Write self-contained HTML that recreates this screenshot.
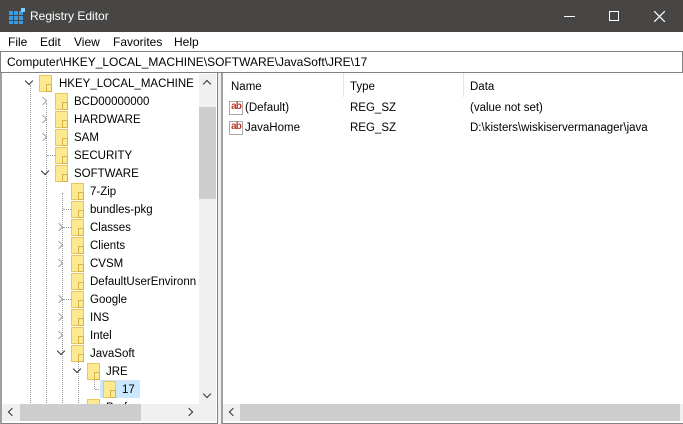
<!DOCTYPE html>
<html><head><style>
*{margin:0;padding:0;box-sizing:border-box}
body{width:683px;height:424px;overflow:hidden;background:#f0f0f0;font-family:"Liberation Sans",sans-serif;font-size:12px;color:#000;position:relative}
.a{position:absolute}
.title{left:0;top:0;width:683px;height:32px;background:#484644;color:#fff}
.menu{left:0;top:32px;width:683px;height:19px;background:#fff}
.menu span{position:absolute;top:3px}
.addr{left:0;top:51px;width:683px;height:22px;background:#fff;border:1px solid #828282;padding:3px 0 0 6px;white-space:nowrap}
.lp{left:0;top:73px;width:218px;height:351px;background:#fff;border:1px solid #828282;border-top:none;border-left:2px solid #a0a0a0}
.rp{left:221px;top:73px;width:462px;height:351px;background:#fff;border-left:2px solid #a0a0a0;border-bottom:1px solid #828282}
.f{position:absolute;width:13px;height:17px;background:#fde98f;border:1px solid #e8c65c}
.f:after{content:"";position:absolute;right:-1px;bottom:-1px;width:4px;height:6px;border:1px solid #d9b24a;background:#fde98f}
.t{position:absolute;white-space:nowrap;font-size:11.5px}
.cv{position:absolute;width:6px;height:6px;border-right:1.5px solid #333;border-bottom:1.5px solid #333;transform:rotate(45deg)}
.cr{position:absolute;width:6px;height:6px;border-right:1.5px solid #a0a0a0;border-bottom:1.5px solid #a0a0a0;transform:rotate(-45deg)}
.dv{position:absolute;border-left:1px dotted #999;width:0}
.dh{position:absolute;border-top:1px dotted #999;height:0}
.ab{position:absolute;width:14px;height:14px;border:1px solid #aaa;background:#fff;color:#c0392b;font-size:10px;font-weight:bold;line-height:10px;text-align:center;letter-spacing:-1px}
</style></head><body>
<div class="a title">
 <svg class="a" style="left:9px;top:8px" width="16" height="16"><g fill="#3a9be0"><rect x="0" y="3" width="4" height="4"/><rect x="5" y="3" width="4" height="4"/><rect x="10" y="3" width="4" height="4"/><rect x="0" y="8" width="4" height="4"/><rect x="5" y="8" width="4" height="4"/><rect x="10" y="8" width="4" height="4"/><rect x="0" y="13" width="4" height="3"/><rect x="5" y="13" width="4" height="3"/><rect x="10" y="13" width="4" height="3"/></g><rect x="12" y="0" width="4" height="4" fill="#7fd0ff"/></svg>
 <span class="a" style="left:30px;top:9px;font-size:12px">Registry Editor</span>
 <div class="a" style="left:564px;top:16px;width:11px;height:1px;background:#fff"></div>
 <div class="a" style="left:609px;top:11px;width:10px;height:10px;border:1px solid #fff"></div>
 <svg class="a" style="left:654px;top:11px" width="11" height="11"><path d="M0 0L11 11M11 0L0 11" stroke="#fff" stroke-width="1.2"/></svg>
</div>
<div class="a menu"><span style="left:8px">File</span><span style="left:40px">Edit</span><span style="left:74px">View</span><span style="left:113px">Favorites</span><span style="left:174px">Help</span></div>
<div class="a addr">Computer\HKEY_LOCAL_MACHINE\SOFTWARE\JavaSoft\JRE\17</div>
<div class="a lp">
 <div class="dv" style="left:28px;top:12px;height:320px"></div>
 <div class="dv" style="left:44px;top:30px;height:302px"></div>
 <div class="dv" style="left:60px;top:120px;height:212px"></div>
 <div class="dv" style="left:76px;top:282px;height:50px"></div>
 <div class="dv" style="left:92px;top:300px;height:16px"></div>
 <div class="dh" style="left:45px;top:82px;width:8px"></div>
 <div class="dh" style="left:61px;top:136px;width:8px"></div>
 <div class="dh" style="left:61px;top:154px;width:8px"></div>
 <div class="dh" style="left:61px;top:226px;width:8px"></div>
 <div class="dh" style="left:93px;top:316px;width:8px"></div>
 <div class="a" style="left:98px;top:307px;width:40px;height:18px;background:#cce8ff"></div>
</div>
<div id="tree"></div>
<div class="a" style="left:199px;top:74px;width:17px;height:330px;background:#f0f0f0"></div>
<div class="a" style="left:199px;top:107px;width:17px;height:92px;background:#cdcdcd"></div>
<div class="cv" style="left:204px;top:81px;transform:rotate(-135deg)"></div>
<div class="cv" style="left:204px;top:391px"></div>
<div class="a" style="left:2px;top:404px;width:214px;height:17px;background:#f0f0f0"></div>
<div class="a" style="left:20px;top:404px;width:121px;height:17px;background:#cdcdcd"></div>
<div class="cv" style="left:9px;top:409px;transform:rotate(135deg)"></div>
<div class="cv" style="left:186px;top:409px;transform:rotate(-45deg)"></div>
<div class="a rp">
 <div class="t" style="left:8px;top:8px">Name</div>
 <div class="a" style="left:120px;top:0;width:1px;height:24px;background:#e5e5e5"></div>
 <div class="t" style="left:127px;top:8px">Type</div>
 <div class="a" style="left:240px;top:0;width:1px;height:24px;background:#e5e5e5"></div>
 <div class="t" style="left:247px;top:8px">Data</div>
 <div class="ab" style="left:6px;top:28px">ab</div><div class="t" style="left:22px;top:29px">(Default)</div><div class="t" style="left:127px;top:29px">REG_SZ</div><div class="t" style="left:247px;top:29px">(value not set)</div>
 <div class="ab" style="left:6px;top:48px">ab</div><div class="t" style="left:22px;top:49px">JavaHome</div><div class="t" style="left:127px;top:49px">REG_SZ</div><div class="t" style="left:247px;top:49px">D:\kisters\wiskiservermanager\java</div>
</div>
<div class="a" style="left:223px;top:404px;width:460px;height:17px;background:#f0f0f0"></div>
<div class="a" style="left:240px;top:404px;width:440px;height:17px;background:#cdcdcd"></div>
<div class="cv" style="left:230px;top:409px;transform:rotate(135deg)"></div>
<script>
var rows=[["HKEY_LOCAL_MACHINE",0,"v"],["BCD00000000",1,">"],["HARDWARE",1,">"],["SAM",1,">"],["SECURITY",1,""],["SOFTWARE",1,"v"],["7-Zip",2,""],["bundles-pkg",2,""],["Classes",2,">"],["Clients",2,">"],["CVSM",2,">"],["DefaultUserEnvironn",2,""],["Google",2,">"],["INS",2,">"],["Intel",2,">"],["JavaSoft",2,"v"],["JRE",3,"v"],["17",4,""],["Prefs",3,""]];
var h="";rows.forEach(function(r,i){var y=74+i*18,x=39+r[1]*16;
if(r[2]=="v")h+='<div class="cv" style="left:'+(x-13)+'px;top:'+(y+4)+'px"></div>';
if(r[2]==">")h+='<div class="cr" style="left:'+(x-15)+'px;top:'+(y+6)+'px"></div>';
h+='<div class="f" style="left:'+x+'px;top:'+(y+1)+'px"></div><div class="t" style="left:'+(x+19+(r[1]==0?1:0))+'px;top:'+(y+4)+'px">'+r[0]+'</div>';});
var d=document.getElementById("tree");d.className="a";d.style.cssText="left:0;top:0;width:199px;height:404px;overflow:hidden;clip-path:inset(74px 0 0 2px)";d.innerHTML=h;
</script>
</body></html>
